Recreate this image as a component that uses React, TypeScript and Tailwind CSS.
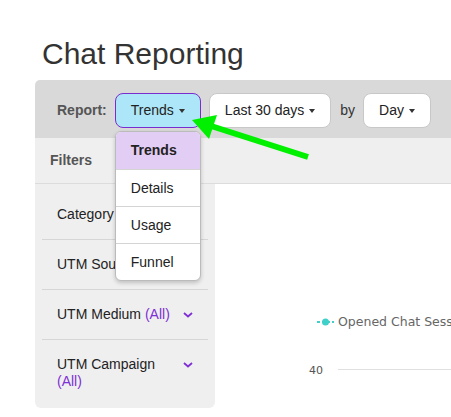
import React from 'react';

const sans = "font-['Liberation_Sans',Arial,Helvetica,sans-serif]";

function Caret() {
  return (
    <span className="ml-[5px] inline-block h-0 w-0 border-l-[3.5px] border-r-[3.5px] border-t-[4px] border-l-transparent border-r-transparent border-t-[#333]" />
  );
}

function Chevron() {
  return (
    <svg width="10" height="6" viewBox="0 0 10 6" className="mt-[6px] shrink-0">
      <path d="M1 1l4 3.5L9 1" fill="none" stroke="#7f2fd6" strokeWidth="1.8" />
    </svg>
  );
}

const filters = [
  { label: 'Category', pt: 'pt-[22px]' },
  { label: 'UTM Source', pt: 'pt-[16px]' },
  { label: 'UTM Medium', pt: 'pt-[16px]' },
  { label: 'UTM Campaign', pt: 'pt-[16px]' },
];

const reportTypes = ['Trends', 'Details', 'Usage', 'Funnel'];

export default function App() {
  return (
    <div className={`relative h-[417px] w-[451px] overflow-hidden bg-white ${sans}`}>
      {/* Title */}
      <h1 className="pl-[42px] pt-[36px] text-[30px] font-normal leading-[36px] text-[#333]">
        Chat Reporting
      </h1>

      {/* Report panel */}
      <div className="mt-[8px] ml-[35px] w-[470px]">
        {/* Toolbar */}
        <div className="flex h-[58px] items-start gap-[8px] rounded-tl-[5px] bg-[#d9d9d9] pl-[22px] pt-[13px] text-[14px]">
          <span className="font-bold leading-[35px] text-[#555]">Report:</span>
          <div className="relative">
            <button className="flex h-[35px] items-center rounded-[8px] border border-[#7a2ccf] bg-[#ade6f8] px-[15px] text-[#222]">
              Trends
              <Caret />
            </button>
            {/* Open menu */}
            <div className="absolute left-0 top-[38px] z-10 w-[86px] overflow-hidden rounded-[6px] border border-[#bbb] bg-white shadow-[0_2px_4px_rgba(0,0,0,0.2)]">
              {reportTypes.map((t, i) => (
                <div
                  key={t}
                  className={`flex h-[37px] items-center px-[15px] text-[14px] ${
                    i === 0 ? 'bg-[#e2cdf4] font-bold text-[#222]' : 'border-t border-[#d4d4d4] text-[#222]'
                  }`}
                >
                  {t}
                </div>
              ))}
            </div>
          </div>
          <button className="flex h-[35px] items-center rounded-[8px] border border-[#c8c8c8] bg-white px-[15px] text-[#222]">
            Last 30 days
            <Caret />
          </button>
          <span className="ml-[1px] leading-[35px] text-[#333]">by</span>
          <button className="flex h-[35px] items-center rounded-[8px] border border-[#c8c8c8] bg-white px-[15px] text-[#222]">
            Day
            <Caret />
          </button>
        </div>

        {/* Filters header */}
        <div className="flex h-[46px] items-center border-b border-[#dcdcdc] bg-[#efefef] pl-[15px] text-[14px] font-bold text-[#555]">
          Filters
        </div>

        <div className="flex">
          {/* Sidebar */}
          <div className="w-[180px] shrink-0 rounded-b-[6px] bg-[#efefef] px-[7px] pb-[18px]">
            {filters.map((f, i) => (
              <div
                key={f.label}
                className={`flex items-start justify-between px-[15px] ${f.pt} ${
                  i < filters.length - 1 ? 'border-b border-[#d6d6d6] pb-[16px]' : ''
                }`}
              >
                <span className="w-[118px] text-[14px] leading-[17px] text-[#222]">
                  {f.label} <span className="text-[#7f2fd6]">(All)</span>
                </span>
                <Chevron />
              </div>
            ))}
          </div>

          {/* Chart */}
          <div className="flex-1 bg-white font-['DejaVu_Sans',Verdana,sans-serif]">
            <div className="flex items-center pl-[102px] pt-[130px]">
              <svg width="17" height="8" viewBox="0 0 17 8" className="shrink-0">
                <line x1="0" y1="4" x2="17" y2="4" stroke="#3fd0c9" strokeWidth="2" strokeDasharray="3 2" />
                <circle cx="8.5" cy="4" r="3.5" fill="#3fd0c9" />
              </svg>
              <span className="ml-[4px] whitespace-nowrap text-[12.5px] leading-[16px] text-[#666]">
                Opened Chat Sessions
              </span>
            </div>
            <div className="mt-[34px] flex items-center pl-[94px]">
              <span className="text-[11px] leading-[14px] text-[#555]">40</span>
              <div className="ml-[15px] mb-[3px] h-px flex-1 bg-[#e0e0e0]" />
            </div>
          </div>
        </div>
      </div>

      {/* Annotation arrow */}
      <svg className="pointer-events-none absolute left-0 top-0" width="451" height="417">
        <line x1="308" y1="157" x2="208" y2="125" stroke="#00f000" strokeWidth="6" />
        <polygon points="192,120 217,115 209,139" fill="#00f000" />
      </svg>
    </div>
  );
}
